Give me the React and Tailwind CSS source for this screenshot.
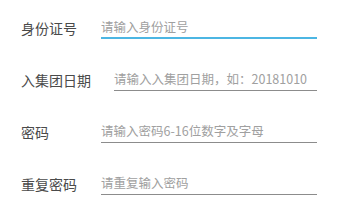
import React from 'react';

const fields = [
  { label: '身份证号', placeholder: '请输入身份证号', active: true },
  { label: '入集团日期', placeholder: '请输入入集团日期，如：20181010' },
  { label: '密码', placeholder: '请输入密码6-16位数字及字母' },
  { label: '重复密码', placeholder: '请重复输入密码' },
];

export default function App() {
  return (
    <div
      className="w-[337px] h-[212px] bg-white pt-[2px] overflow-hidden"
      style={{ fontFamily: '"Noto Sans CJK SC", Roboto, sans-serif' }}
    >
      {fields.map((f) => (
        <div key={f.label} className="flex items-center h-[52px] pl-[21px] pr-[20px]">
          <span className="min-w-[57px] mr-[23px] text-[14px] text-[#4a4a4a] whitespace-nowrap">{f.label}</span>
          <div
            className={
              'flex-1 h-[22px] flex items-center ' +
              (f.active ? 'border-b-2 border-[#4cb6e3]' : 'border-b border-[#8c8c8c]')
            }
          >
            <input
              type="text"
              placeholder={f.placeholder}
              className="w-full bg-transparent outline-none text-[12.5px] text-[#333] placeholder:text-[#a0a0a0]"
            />
          </div>
        </div>
      ))}
    </div>
  );
}
